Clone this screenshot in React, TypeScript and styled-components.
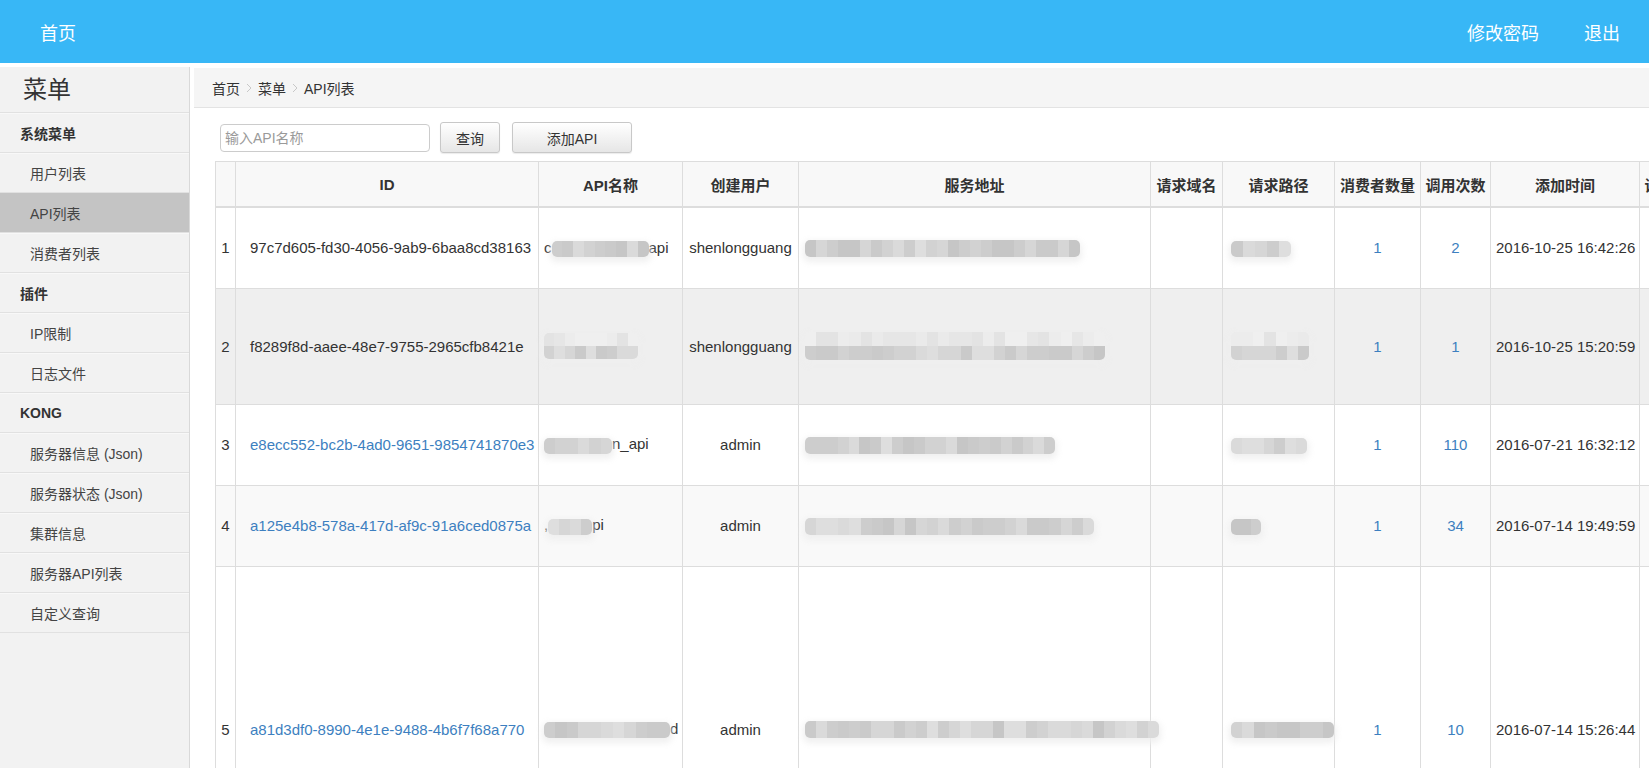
import React from "react";
import styled, { createGlobalStyle } from "styled-components";

const GlobalStyle = createGlobalStyle`
  html, body {
    margin: 0;
    padding: 0;
    overflow: hidden;
    background: #fff;
  }
  body {
    font-family: "Liberation Sans", "Noto Sans CJK SC", sans-serif;
    font-size: 14px;
    color: #333;
  }
`;

// ---- top bar ----
const TopBar = styled.header`
  height: 63px;
  background: #38b7f6;
  display: flex;
  align-items: center;
  justify-content: space-between;
  padding: 0 29px 0 40px;
  box-sizing: border-box;
  font-size: 18px;
  color: #fff;
`;

const TopNav = styled.nav`
  display: flex;
  gap: 45px;
`;

const TopLink = styled.a`
  color: #fff;
  text-decoration: none;
  cursor: pointer;
`;

// ---- layout ----
const Layout = styled.div`
  display: flex;
  gap: 4px;
  margin-top: 4px;
  height: calc(100vh - 67px);
`;

const Sidebar = styled.aside`
  width: 189px;
  flex-shrink: 0;
  background: #f2f2f2;
  border-right: 1px solid #d9d9d9;
`;

const SideTitle = styled.div`
  height: 46px;
  box-sizing: border-box;
  padding-left: 23px;
  line-height: 45px;
  font-size: 24px;
  color: #333;
  border-bottom: 1px solid #e1e1e1;
`;

const SideItem = styled.div<{ $group?: boolean; $active?: boolean }>`
  height: 40px;
  box-sizing: border-box;
  display: flex;
  align-items: center;
  padding-left: ${(p) => (p.$group ? "20px" : "30px")};
  font-size: 14px;
  font-weight: ${(p) => (p.$group ? 700 : 400)};
  color: ${(p) => (p.$group ? "#333" : "#444")};
  background: ${(p) => (p.$active ? "#c4c4c4" : "transparent")};
  border-bottom: 1px solid #e1e1e1;
  box-shadow: inset 0 1px 0 ${(p) => (p.$active ? "#c4c4c4" : "#f8f8f8")};
  cursor: pointer;
`;

const Main = styled.main`
  flex: 1;
  min-width: 0;
  overflow: hidden;
`;

const Breadcrumb = styled.div`
  height: 40px;
  margin-top: 1px;
  box-sizing: border-box;
  background: #f5f5f5;
  border-bottom: 1px solid #e3e3e3;
  display: flex;
  align-items: center;
  padding-left: 18px;
  font-size: 14px;
  color: #333;
`;

const Chevron = styled.svg`
  margin: 0 6px;
`;

const Toolbar = styled.div`
  display: flex;
  align-items: center;
  padding: 14px 0 0 26px;
`;

const SearchInput = styled.input`
  width: 210px;
  height: 28px;
  box-sizing: border-box;
  border: 1px solid #ccc;
  border-radius: 4px;
  padding: 0 4px;
  font-family: inherit;
  font-size: 14px;
  color: #333;
  outline: none;
  &::placeholder {
    color: #9a9a9a;
  }
`;

const Button = styled.button<{ $w: number; $gap: number }>`
  width: ${(p) => p.$w}px;
  height: 31px;
  margin-left: ${(p) => p.$gap}px;
  border: 1px solid #c8c8c8;
  border-radius: 3px;
  background: linear-gradient(#ffffff, #e6e6e6);
  box-shadow: 0 1px 1px rgba(0, 0, 0, 0.08);
  font-family: inherit;
  font-size: 14px;
  color: #333;
  cursor: pointer;
`;

// ---- table ----
const TableWrap = styled.div`
  margin: 8px 0 0 21px;
`;

const Table = styled.table`
  border-collapse: collapse;
  table-layout: fixed;
  width: 1494px;
  font-size: 15px;
  color: #333;
`;

const Th = styled.th`
  height: 44px;
  background: #f8f8f8;
  border: 1px solid #ddd;
  border-bottom: 2px solid #ddd;
  font-weight: 700;
  text-align: center;
  white-space: nowrap;
  overflow: hidden;
  padding: 0;
`;

const Tr = styled.tr<{ $bg: string; $h: number }>`
  background: ${(p) => p.$bg};
  height: ${(p) => p.$h}px;
`;

const Td = styled.td<{ $align?: string; $pl?: number }>`
  border: 1px solid #ddd;
  padding: 0 0 0 ${(p) => p.$pl ?? 6}px;
  text-align: ${(p) => p.$align ?? "left"};
  vertical-align: middle;
  white-space: nowrap;
`;

const Link = styled.a`
  color: #3d7fc0;
  text-decoration: none;
  cursor: pointer;
`;

// blurred redaction blocks over private values
const Smudge = styled.span<{ $w: number; $h: number }>`
  display: inline-flex;
  flex-direction: column;
  vertical-align: middle;
  width: ${(p) => p.$w}px;
  height: ${(p) => p.$h}px;
  border-radius: 5px;
  overflow: hidden;
  filter: blur(0.5px);
  box-shadow: 0 3px 6px 2px rgba(238, 238, 238, 0.9);
`;

const SmudgeRow = styled.span`
  flex: 1;
  display: flex;
`;

const Pixel = styled.span<{ $shade: string }>`
  flex: 1;
  background: ${(p) => p.$shade};
`;

const darkShades = ["#d6d6d6", "#cdcdcd", "#dadada", "#c6c6c6", "#d2d2d2", "#dedede", "#cacaca"];
const lightShades = ["#ececec", "#e6e6e6", "#efefef", "#e3e3e3", "#eaeaea"];

const Blur = ({ w, h = 16, seed = 1, tiers = 1 }: { w: number; h?: number; seed?: number; tiers?: number }) => {
  let s = seed * 9301 + 49297;
  const next = () => {
    s = (s * 9301 + 49297) % 233280;
    return s / 233280;
  };
  const count = Math.max(2, Math.round(w / 11));
  return (
    <Smudge $w={w} $h={h}>
      {Array.from({ length: tiers }).map((_, t) => {
        const pal = tiers > 1 && t === 0 ? lightShades : darkShades;
        return (
          <SmudgeRow key={t}>
            {Array.from({ length: count }).map((_, i) => (
              <Pixel key={i} $shade={pal[Math.floor(next() * pal.length)]} />
            ))}
          </SmudgeRow>
        );
      })}
    </Smudge>
  );
};

type ApiRow = {
  no: number;
  id: string;
  idLink: boolean;
  name: [string, number, string];
  user: string;
  addr: number;
  path: number;
  consumers: number;
  calls: number;
  time: string;
  h: number;
  bg: string;
  tiers: number;
};

const rows: ApiRow[] = [
  { no: 1, id: "97c7d605-fd30-4056-9ab9-6baa8cd38163", idLink: false, name: ["c", 97, "api"], user: "shenlongguang", addr: 275, path: 60, consumers: 1, calls: 2, time: "2016-10-25 16:42:26", h: 81, bg: "#fff", tiers: 1 },
  { no: 2, id: "f8289f8d-aaee-48e7-9755-2965cfb8421e", idLink: false, name: ["", 94, ""], user: "shenlongguang", addr: 300, path: 78, consumers: 1, calls: 1, time: "2016-10-25 15:20:59", h: 116, bg: "#efefef", tiers: 2 },
  { no: 3, id: "e8ecc552-bc2b-4ad0-9651-9854741870e3", idLink: true, name: ["", 68, "n_api"], user: "admin", addr: 250, path: 76, consumers: 1, calls: 110, time: "2016-07-21 16:32:12", h: 81, bg: "#fff", tiers: 1 },
  { no: 4, id: "a125e4b8-578a-417d-af9c-91a6ced0875a", idLink: true, name: [",", 44, "pi"], user: "admin", addr: 289, path: 30, consumers: 1, calls: 34, time: "2016-07-14 19:49:59", h: 81, bg: "#f9f9f9", tiers: 1 },
  { no: 5, id: "a81d3df0-8990-4e1e-9488-4b6f7f68a770", idLink: true, name: ["", 126, "d"], user: "admin", addr: 354, path: 103, consumers: 1, calls: 10, time: "2016-07-14 15:26:44", h: 326, bg: "#fff", tiers: 1 },
];

const columns: [string, number][] = [
  ["", 20],
  ["ID", 303],
  ["API名称", 144],
  ["创建用户", 116],
  ["服务地址", 352],
  ["请求域名", 72],
  ["请求路径", 112],
  ["消费者数量", 86],
  ["调用次数", 70],
  ["添加时间", 149],
  ["请求方法", 70],
];

const menu: { label: string; group?: boolean; active?: boolean }[] = [
  { label: "系统菜单", group: true },
  { label: "用户列表" },
  { label: "API列表", active: true },
  { label: "消费者列表" },
  { label: "插件", group: true },
  { label: "IP限制" },
  { label: "日志文件" },
  { label: "KONG", group: true },
  { label: "服务器信息 (Json)" },
  { label: "服务器状态 (Json)" },
  { label: "集群信息" },
  { label: "服务器API列表" },
  { label: "自定义查询" },
];

const Sep = () => (
  <Chevron width="6" height="10" viewBox="0 0 6 10">
    <path d="M1 1l4 4-4 4" fill="none" stroke="#c8c8c8" strokeWidth="1" />
  </Chevron>
);

export default function App() {
  return (
    <>
      <GlobalStyle />
      <TopBar>
        <TopLink>首页</TopLink>
        <TopNav>
          <TopLink>修改密码</TopLink>
          <TopLink>退出</TopLink>
        </TopNav>
      </TopBar>

      <Layout>
        <Sidebar>
          <SideTitle>菜单</SideTitle>
          {menu.map((m) => (
            <SideItem key={m.label} $group={m.group} $active={m.active}>
              {m.label}
            </SideItem>
          ))}
        </Sidebar>

        <Main>
          <Breadcrumb>
            首页
            <Sep />
            菜单
            <Sep />
            API列表
          </Breadcrumb>

          <Toolbar>
            <SearchInput placeholder="输入API名称" />
            <Button $w={60} $gap={10}>查询</Button>
            <Button $w={120} $gap={12}>添加API</Button>
          </Toolbar>

          <TableWrap>
            <Table>
              <colgroup>
                {columns.map(([label, w], i) => (
                  <col key={i} style={{ width: w }} />
                ))}
              </colgroup>
              <thead>
                <tr>
                  {columns.map(([label], i) => (
                    <Th key={i}>{label}</Th>
                  ))}
                </tr>
              </thead>
              <tbody>
                {rows.map((r) => (
                  <Tr key={r.no} $bg={r.bg} $h={r.h}>
                    <Td $align="center" $pl={0}>{r.no}</Td>
                    <Td $pl={14}>{r.idLink ? <Link>{r.id}</Link> : r.id}</Td>
                    <Td $pl={5}>
                      {r.name[0]}
                      <Blur w={r.name[1]} h={r.tiers > 1 ? 26 : 16} seed={r.no * 3} tiers={r.tiers} />
                      {r.name[2]}
                    </Td>
                    <Td $align="center" $pl={0}>{r.user}</Td>
                    <Td $pl={6}>
                      <Blur w={r.addr} h={r.tiers > 1 ? 28 : 17} seed={r.no * 7} tiers={r.tiers} />
                    </Td>
                    <Td />
                    <Td $pl={8}>
                      <Blur w={r.path} h={r.tiers > 1 ? 28 : 16} seed={r.no * 11} tiers={r.tiers} />
                    </Td>
                    <Td $align="center" $pl={0}><Link>{r.consumers}</Link></Td>
                    <Td $align="center" $pl={0}><Link>{r.calls}</Link></Td>
                    <Td $pl={5}>{r.time}</Td>
                    <Td />
                  </Tr>
                ))}
              </tbody>
            </Table>
          </TableWrap>
        </Main>
      </Layout>
    </>
  );
}
